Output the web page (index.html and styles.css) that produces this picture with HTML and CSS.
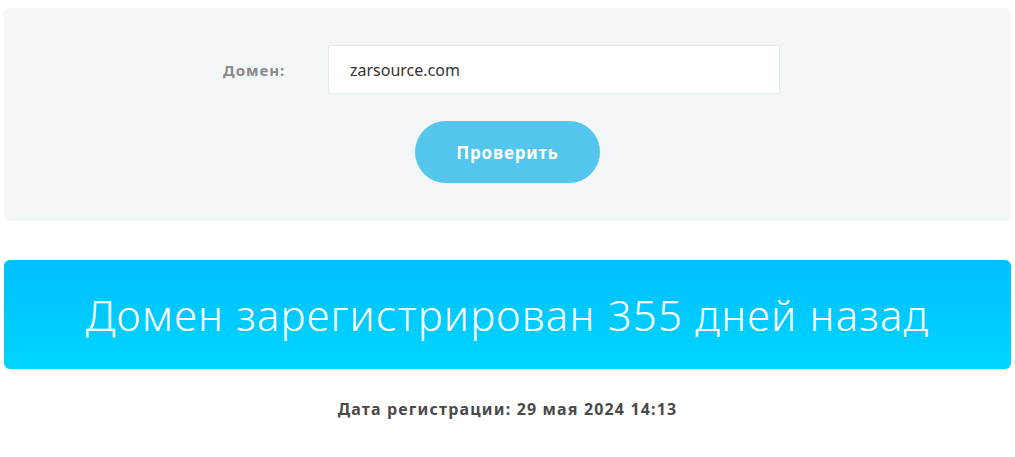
FILE: index.html
```html
<!DOCTYPE html>
<html lang="ru">
<head>
<meta charset="utf-8">
<link rel="stylesheet" href="styles.css">
</head>
<body>
<div class="page">
  <form class="panel">
    <div class="row">
      <label class="label" for="domain">Домен:</label>
      <div class="input">zarsource.com</div>
    </div>
    <button type="button" class="btn">Проверить</button>
  </form>
  <div class="banner">Домен зарегистрирован 355 дней назад</div>
  <p class="date">Дата регистрации: 29 мая 2024 14:13</p>
</div>
</body>
</html>
```
FILE: styles.css
```css
* { box-sizing: border-box; }
html, body { margin: 0; background: #fff; }
body { font-family: "Noto Sans", "Open Sans", sans-serif; }
.page { padding: 8px 4px 0; }
.panel {
  margin: 0;
  background: #f3f6f7;
  border-radius: 6px;
  height: 213px;
  padding-top: 37px;
  display: flex;
  flex-direction: column;
  align-items: center;
}
.row {
  display: flex;
  align-items: center;
  gap: 41px;
  padding-right: 12px;
}
.label {
  font-size: 15px;
  font-weight: 700;
  color: #8a8a8a;
  letter-spacing: 1px;
  width: 64px;
  white-space: nowrap;
}
.input {
  width: 452px;
  height: 49px;
  background: #fff;
  border: 1px solid #e6eaec;
  border-radius: 2px;
  padding: 0 21px;
  display: flex;
  align-items: center;
  font-size: 16px;
  color: #333;
}
.btn {
  margin-top: 27px;
  width: 185px;
  height: 62px;
  border: 0;
  border-radius: 31px;
  background: #54c5ec;
  color: #fff;
  font-family: inherit;
  font-size: 17px;
  font-weight: 700;
  letter-spacing: 0.8px;
}
.banner {
  margin-top: 39px;
  height: 109px;
  border-radius: 6px;
  background: linear-gradient(to bottom, #00bfff, #00d5ff);
  color: #fff;
  font-size: 42px;
  font-weight: 300;
  letter-spacing: 1.2px;
  display: flex;
  align-items: center;
  justify-content: center;
}
.date {
  margin: 29px 0 0;
  text-align: center;
  font-size: 16px;
  font-weight: 700;
  letter-spacing: 1.15px;
  color: #4a4a4a;
}
```
